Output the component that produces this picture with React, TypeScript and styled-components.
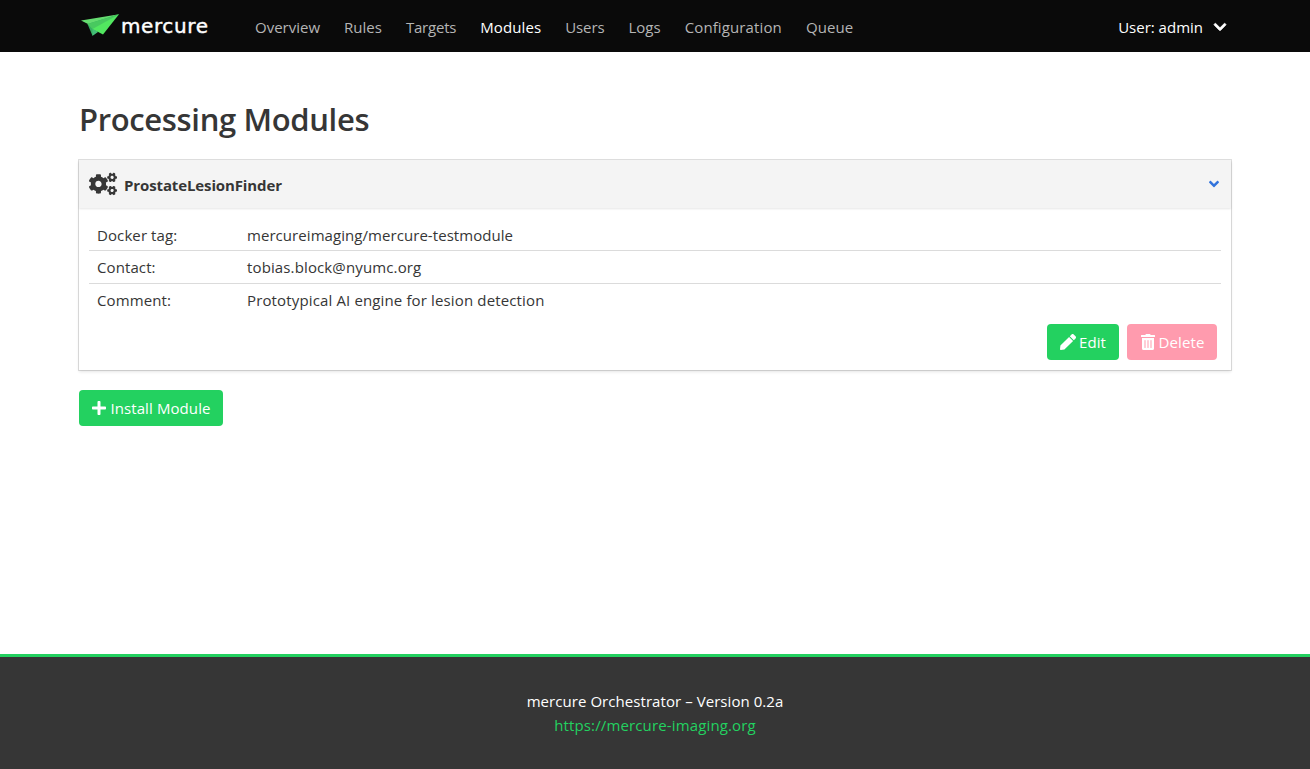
import React from "react";
import styled, { createGlobalStyle } from "styled-components";
import { FaCogs, FaPen, FaTrashAlt, FaPlus, FaChevronDown, FaAngleDown } from "react-icons/fa";

const GlobalStyle = createGlobalStyle`
  *, *::before, *::after { box-sizing: border-box; }
  body {
    margin: 0;
    background: #fff;
    color: #363636;
    font-family: "Segoe UI", "Open Sans", "Noto Sans", sans-serif;
    font-size: 15px;
    line-height: 24px;
  }
  h1, p, dl, dt, dd { margin: 0; }
  a { text-decoration: none; }
`;

const Page = styled.div`
  display: flex;
  flex-direction: column;
  height: 769px;
  overflow: hidden;
`;

const Navbar = styled.nav`
  flex: none;
  height: 52px;
  background: #0a0a0a;
`;

const Container = styled.div`
  width: 1152px;
  margin: 0 auto;
`;

const NavRow = styled(Container)`
  display: flex;
  align-items: center;
  height: 52px;
`;

const Brand = styled.a`
  display: flex;
  align-items: flex-start;
  width: 164px;
  height: 52px;
  padding: 13px 0 0 2px;
  color: #fff;
`;

const BrandName = styled.span`
  margin: 1px 0 0 1px;
  font-family: "DejaVu Sans", sans-serif;
  font-size: 20px;
  line-height: 24px;
  letter-spacing: 0.6px;
  -webkit-text-stroke: 0.4px #fff;
`;

const NavItem = styled.a<{ $active?: boolean; $track?: number }>`
  padding: 1px 12px 0;
  color: ${(p) => (p.$active ? "#fff" : "#b5b5b5")};
  letter-spacing: ${(p) => p.$track ?? 0}px;
  white-space: nowrap;
`;

const UserMenu = styled.div`
  display: flex;
  align-items: center;
  gap: 10px;
  margin-left: auto;
  padding: 1px 4px 0 0;
  color: #fff;
`;

const UserChevron = styled(FaChevronDown)`
  stroke: currentColor;
  stroke-width: 28px;
`;

const Main = styled.main`
  flex: 1;
  padding-top: 47px;
`;

const Title = styled.h1`
  height: 40px;
  margin-bottom: 21px;
  font-size: 31px;
  line-height: 40px;
  font-weight: 600;
  letter-spacing: -0.35px;
  white-space: nowrap;
`;

const Card = styled.section`
  height: 210px;
  background: #fff;
  box-shadow: 0 2px 3px rgba(10, 10, 10, 0.1), 0 0 0 1px rgba(10, 10, 10, 0.13);
`;

const CardHeader = styled.header`
  display: flex;
  align-items: center;
  height: 48px;
  padding: 0 9px 0 10px;
  background: #f4f4f4;
  box-shadow: 0 1px 2px rgba(10, 10, 10, 0.1);
`;

const ModuleName = styled.span`
  margin: 2px auto 0 7px;
  font-weight: 700;
  font-size: 15px;
  letter-spacing: -0.12px;
`;

const Details = styled.dl`
  padding: 10px 10px 0;
`;

const DetailRow = styled.div`
  display: flex;
  height: 32px;
  padding: 5px 8px 0;
  & + & {
    height: 33px;
    padding-top: 4px;
    border-top: 1px solid #dbdbdb;
  }
`;

const DetailLabel = styled.dt`
  width: 150px;
  letter-spacing: 0.1px;
`;

const DetailValue = styled.dd<{ $track?: number }>`
  letter-spacing: ${(p) => p.$track ?? 0}px;
`;

const Actions = styled.div`
  display: flex;
  justify-content: flex-end;
  gap: 8px;
  padding: 8px 14px 0 0;
`;

const Button = styled.button<{ $tone: "green" | "red"; $width: number }>`
  display: flex;
  align-items: center;
  justify-content: center;
  gap: 3px;
  width: ${(p) => p.$width}px;
  height: 36px;
  padding: 0;
  border: 0;
  border-radius: 4px;
  background: ${(p) => (p.$tone === "green" ? "#23d160" : "#ff9bae")};
  color: #fff;
  font: inherit;
  letter-spacing: 0.1px;
  white-space: nowrap;
`;

const InstallRow = styled.div`
  padding-top: 20px;
`;

const Footer = styled.footer`
  flex: none;
  height: 115px;
  padding-top: 32px;
  border-top: 3px solid #23d160;
  background: #363636;
  color: #fff;
  text-align: center;
`;

const Version = styled.p`
  letter-spacing: 0.06px;
`;

const FooterLink = styled.a`
  color: #23d160;
  letter-spacing: 0.14px;
`;

const navItems = [
  { name: "Overview" },
  { name: "Rules" },
  { name: "Targets", track: -0.2 },
  { name: "Modules", active: true, track: 0.1 },
  { name: "Users", track: -0.1 },
  { name: "Logs" },
  { name: "Configuration", track: 0.12 },
  { name: "Queue", track: 0.1 },
];

const details = [
  { label: "Docker tag:", value: "mercureimaging/mercure-testmodule", track: 0.06 },
  { label: "Contact:", value: "tobias.block@nyumc.org", track: 0.13 },
  { label: "Comment:", value: "Prototypical AI engine for lesion detection", track: 0.14 },
];

function PlaneLogo() {
  return (
    <svg width="39" height="24" viewBox="0 0 39 24">
      <path d="M0 7.5 38 1.2 9 12Z" fill="#65dc70" />
      <path d="M6.5 11 38 1.2 11.5 22.8Z" fill="#36ae62" />
      <path d="M6.5 11 38 1.2 12 16.5Z" fill="#48c95f" />
      <path d="M11.5 16 38 1.2 22 21.5Z" fill="#52e760" />
      <path d="M11.5 16 17 19 11.5 22.8Z" fill="#45bd78" />
    </svg>
  );
}

export default function App() {
  return (
    <Page>
      <GlobalStyle />
      <Navbar>
        <NavRow>
          <Brand>
            <PlaneLogo />
            <BrandName>mercure</BrandName>
          </Brand>
          {navItems.map((item) => (
            <NavItem key={item.name} $active={item.active} $track={item.track}>{item.name}</NavItem>
          ))}
          <UserMenu>
            <span>User: admin</span>
            <UserChevron size={14} />
          </UserMenu>
        </NavRow>
      </Navbar>
      <Main>
        <Container>
          <Title>Processing Modules</Title>
          <Card>
            <CardHeader>
              <FaCogs size={28} />
              <ModuleName>ProstateLesionFinder</ModuleName>
              <FaAngleDown size={16} color="#3273dc" />
            </CardHeader>
            <Details>
              {details.map((row) => (
                <DetailRow key={row.label}>
                  <DetailLabel>{row.label}</DetailLabel>
                  <DetailValue $track={row.track}>{row.value}</DetailValue>
                </DetailRow>
              ))}
            </Details>
            <Actions>
              <Button $tone="green" $width={72}><FaPen size={16} />Edit</Button>
              <Button $tone="red" $width={90}><FaTrashAlt size={16} />Delete</Button>
            </Actions>
          </Card>
          <InstallRow>
            <Button $tone="green" $width={144}><FaPlus size={16} />Install Module</Button>
          </InstallRow>
        </Container>
      </Main>
      <Footer>
        <Version>mercure Orchestrator – Version 0.2a</Version>
        <p><FooterLink>https://mercure-imaging.org</FooterLink></p>
      </Footer>
    </Page>
  );
}
